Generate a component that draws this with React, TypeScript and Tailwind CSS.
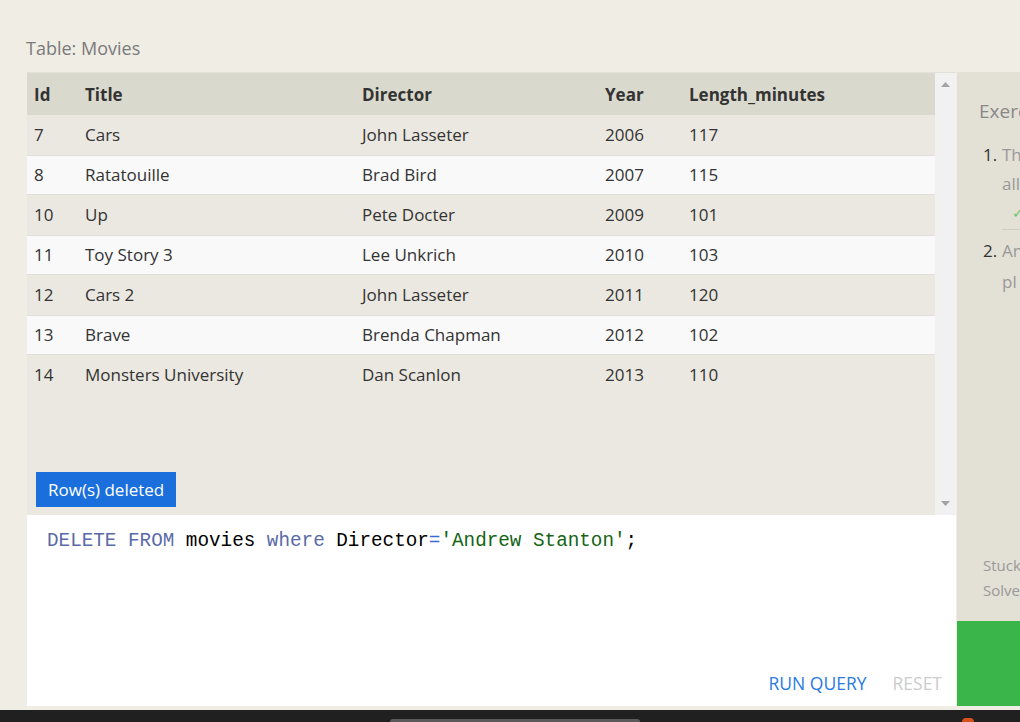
import React from 'react';

const movies = [
  { id: 7, title: 'Cars', director: 'John Lasseter', year: 2006, len: 117 },
  { id: 8, title: 'Ratatouille', director: 'Brad Bird', year: 2007, len: 115 },
  { id: 10, title: 'Up', director: 'Pete Docter', year: 2009, len: 101 },
  { id: 11, title: 'Toy Story 3', director: 'Lee Unkrich', year: 2010, len: 103 },
  { id: 12, title: 'Cars 2', director: 'John Lasseter', year: 2011, len: 120 },
  { id: 13, title: 'Brave', director: 'Brenda Chapman', year: 2012, len: 102 },
  { id: 14, title: 'Monsters University', director: 'Dan Scanlon', year: 2013, len: 110 },
];

export default function App() {
  return (
    <div className="w-[1020px] h-[722px] overflow-hidden bg-[#f0ede5] flex flex-col font-['Open_Sans',sans-serif]">
      <div className="flex-1 flex flex-col pl-[27px]">
        <div className="h-[72px] flex items-end pb-[10px] -ml-[1px] text-[18px] text-[#7a7a7a]">Table: Movies</div>
        <div className="flex">
          {/* left: table + editor */}
          <div className="w-[929px] flex flex-col">
            <div className="h-[443px] flex bg-[#eae8e0] border-t border-[#e2e0d8]">
              <div className="w-[908px] flex flex-col">
                <div className="h-[42px] bg-[#dad9cd] flex items-center pt-[2px] text-[17px] font-bold text-[#333]">
                  <div className="w-[51px] pl-[7px]">Id</div>
                  <div className="w-[277px] pl-[7px]">Title</div>
                  <div className="w-[243px] pl-[7px]">Director</div>
                  <div className="w-[84px] pl-[7px]">Year</div>
                  <div className="flex-1 pl-[7px]">Length_minutes</div>
                </div>
                {movies.map((m, i) => (
                  <div
                    key={m.id}
                    className={`h-[40px] flex items-center text-[17px] text-[#333] ${i % 2 === 1 ? 'bg-[#f9f9f9] border-y border-[#e0dfd9]' : ''}`}
                  >
                    <div className="w-[51px] pl-[7px]">{m.id}</div>
                    <div className="w-[277px] pl-[7px]">{m.title}</div>
                    <div className="w-[243px] pl-[7px]">{m.director}</div>
                    <div className="w-[84px] pl-[7px]">{m.year}</div>
                    <div className="flex-1 pl-[7px]">{m.len}</div>
                  </div>
                ))}
                <div className="flex-1 flex items-end pb-[8px] pl-[9px]">
                  <div className="bg-[#1a6fdc] text-white text-[17px] h-[35px] px-[12px] flex items-center">Row(s) deleted</div>
                </div>
              </div>
              <div className="w-[21px] bg-[#f1f1f1] flex flex-col items-center justify-between py-[9px]">
                <svg width="9" height="5" viewBox="0 0 9 5"><path d="M0 5 L4.5 0 L9 5 Z" fill="#a3a3a3" /></svg>
                <svg width="9" height="5" viewBox="0 0 9 5"><path d="M0 0 L4.5 5 L9 0 Z" fill="#a3a3a3" /></svg>
              </div>
            </div>
            <div className="h-[191px] bg-white flex flex-col justify-between">
              <div className="pl-[20px] pt-[14px] font-['Liberation_Mono',monospace] text-[19.3px] leading-[24px]">
                <span className="text-[#5a6aa8]">DELETE FROM</span>
                <span className="text-black"> movies </span>
                <span className="text-[#5a6aa8]">where</span>
                <span className="text-black"> Director</span>
                <span className="text-[#3a6ad0]">=</span>
                <span className="text-[#146414]">'Andrew Stanton'</span>
                <span className="text-black">;</span>
              </div>
              <div className="flex justify-end gap-[26px] pr-[14px] pb-[10px] text-[17.5px]">
                <span className="text-[#2a7ae2]">RUN QUERY</span>
                <span className="text-[#cccccc]">RESET</span>
              </div>
            </div>
          </div>
          {/* right panel */}
          <div className="flex-1 flex flex-col ml-[1px]">
            <div className="h-[549px] bg-[#e3e0d6] flex flex-col pl-[22px] overflow-hidden whitespace-nowrap">
              <div className="pt-[25px] text-[19px] text-[#888]">Exercise</div>
              <div className="mt-[14px] flex text-[17px] leading-[29px]">
                <span className="w-[23px] text-[#333] pl-[4px]">1.</span>
                <div className="flex flex-col text-[#999]">
                  <span>The</span>
                  <span>all</span>
                  <span className="text-[#6cc56c] pl-[10px] text-[14px] leading-[30px]">✓</span>
                </div>
              </div>
              <div className="ml-[23px] border-t border-[#cfccc2] mt-[1px]" />
              <div className="mt-[5px] flex text-[17px] leading-[31px]">
                <span className="w-[23px] text-[#333] pl-[4px]">2.</span>
                <div className="flex flex-col text-[#999]">
                  <span>An</span>
                  <span>pl</span>
                </div>
              </div>
              <div className="flex-1" />
              <div className="text-[15px] text-[#999] leading-[25px] pb-[18px] pl-[4px]">
                <div>Stuck</div>
                <div>Solve</div>
              </div>
            </div>
            <div className="h-[85px] bg-[#3ab54a]" />
          </div>
        </div>
      </div>
      <div className="h-[4px]" />
      <div className="h-[12px] bg-[#202020] relative">
        <div className="absolute left-[390px] top-[9px] w-[250px] h-[3px] bg-[#5a5a5a] rounded-t" />
        <div className="absolute left-[962px] top-[8px] w-[12px] h-[4px] bg-[#d8501c] rounded-t-full" />
      </div>
    </div>
  );
}
